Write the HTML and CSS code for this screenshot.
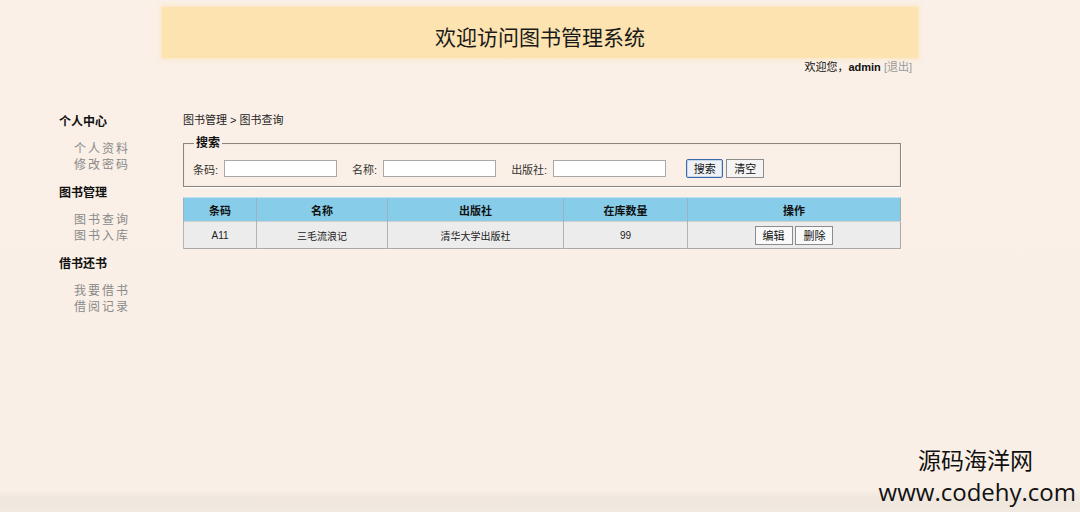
FILE: index.html
```html
<!DOCTYPE html>
<html lang="zh-CN">
<head>
  <meta charset="utf-8">
  <title>图书管理系统</title>
  <link rel="stylesheet" href="styles.css">
</head>
<body>
  <div class="header">欢迎访问图书管理系统</div>
  <div class="userbar">欢迎您，<b>admin</b> <a href="#" class="logout">[退出]</a></div>

  <div class="layout">
    <div class="sidebar">
      <h3>个人中心</h3>
      <ul>
        <li><a href="#">个人资料</a></li>
        <li><a href="#">修改密码</a></li>
      </ul>
      <h3>图书管理</h3>
      <ul>
        <li><a href="#">图书查询</a></li>
        <li><a href="#">图书入库</a></li>
      </ul>
      <h3>借书还书</h3>
      <ul>
        <li><a href="#">我要借书</a></li>
        <li><a href="#">借阅记录</a></li>
      </ul>
    </div>

    <div class="main">
      <div class="crumb">图书管理 &gt; 图书查询</div>
      <fieldset class="search">
        <legend>搜索</legend>
        <div class="search-row">
          <label>条码:</label><input type="text">
          <label>名称:</label><input type="text">
          <label>出版社:</label><input type="text">
          <button class="btn btn-primary">搜索</button>
          <button class="btn">清空</button>
        </div>
      </fieldset>

      <table class="list">
        <tr>
          <th class="c1">条码</th>
          <th class="c2">名称</th>
          <th class="c3">出版社</th>
          <th class="c4">在库数量</th>
          <th class="c5">操作</th>
        </tr>
        <tr>
          <td>A11</td>
          <td>三毛流浪记</td>
          <td>清华大学出版社</td>
          <td>99</td>
          <td><button class="btn">编辑</button> <button class="btn">删除</button></td>
        </tr>
      </table>
    </div>
  </div>

  <div class="watermark">
    <div class="wm-cn">源码海洋网</div>
    <div class="wm-en">www.codehy.com</div>
  </div>
</body>
</html>
```

FILE: styles.css
```css
body {
  margin: 0;
  padding: 0;
  height: 512px;
  overflow: hidden;
  font-family: "Liberation Sans", "Noto Sans CJK SC", sans-serif;
  color: #222;
  background: linear-gradient(to bottom, #faf0e7 0, #f9efe6 490px, #efe6dd 498px, #f2e9e0 512px);
  position: relative;
}

.header {
  width: 756px;
  height: 51px;
  margin: 7px auto 0;
  background: #fde3b0;
  box-shadow: 0 0 4px 2px #fbe8c8;
  font-family: "Noto Sans CJK SC", sans-serif;
  font-size: 21px;
  line-height: 58px;
  text-align: center;
  color: #1a1a1a;
}

.userbar {
  width: 756px;
  margin: 2px auto 0;
  padding-right: 6px;
  box-sizing: border-box;
  text-align: right;
  font-size: 11px;
  line-height: 14px;
  color: #111;
}
.userbar b {
  font-weight: bold;
}
.logout {
  color: #999;
  text-decoration: none;
}

.layout {
  display: flex;
  padding-left: 59px;
  margin-top: 38px;
}

.sidebar {
  width: 124px;
  flex: none;
  padding-top: 2px;
}
.sidebar h3 {
  margin: 0;
  font-size: 12px;
  line-height: 16px;
  font-weight: bold;
  color: #111;
}
.sidebar ul {
  list-style: none;
  margin: 11px 0 12px;
  padding-left: 15px;
}
.sidebar li {
  font-size: 12px;
  line-height: 16px;
  letter-spacing: 2px;
}
.sidebar a {
  color: #8a8a8a;
  text-decoration: none;
}

.main {
  width: 718px;
  flex: none;
}

.crumb {
  font-size: 11px;
  line-height: 16px;
  color: #222;
}

.search {
  margin: 7px 0 0;
  padding: 0 9px 8px;
  border: 1px solid #8c8480;
  box-shadow: inset 0 0 0 1px #f4ebe2, 1px 1px 0 #fff;
}
.search legend {
  padding: 0 2px;
  margin-left: 1px;
  font-size: 12px;
  line-height: 16px;
  font-weight: bold;
  color: #111;
}
.search-row {
  display: flex;
  align-items: center;
  margin-top: 8px;
  font-size: 11px;
  color: #333;
}
.search-row label {
  margin-right: 6px;
}
.search-row input {
  width: 113px;
  height: 17px;
  box-sizing: border-box;
  border: 1px solid #a8a8a8;
  background: #fff;
  margin: 0 15px 0 0;
  padding: 0;
}
.search-row input:nth-of-type(3) {
  margin-right: 20px;
}

.btn {
  height: 19px;
  width: 38px;
  padding: 0;
  margin: 0;
  font-family: "Noto Sans CJK SC", sans-serif;
  font-size: 11px;
  line-height: 17px;
  color: #111;
  background: #f4f4f4;
  border: 1px solid #8c8c8c;
  border-radius: 0;
}
.search-row .btn + .btn {
  margin-left: 3px;
}
.btn-primary {
  width: 37px;
  background: #eef2f7;
  border-color: #3b6aa6;
  border-radius: 2px;
  box-shadow: inset 0 0 0 1px #c9d7ea;
}

.list {
  width: 718px;
  margin-top: 10px;
  border-collapse: collapse;
  border: 1px solid #a9a9a9;
  font-size: 10px;
  text-align: center;
  color: #222;
}
.list th {
  height: 23px;
  padding: 0;
  background: #87cdea;
  border-top: 1px solid #bfe2f1;
  border-left: 1px solid #9bb3c0;
  font-size: 11px;
  font-weight: bold;
  color: #111;
}
.list td {
  height: 26px;
  padding: 0;
  background: #ececec;
  border-left: 1px solid #b4b4b4;
  border-top: 1px solid #d0d0d0;
}
.list td .btn {
  background: #f9f9f9;
}
.c1 { width: 72px; }
.c2 { width: 130px; }
.c3 { width: 175px; }
.c4 { width: 123px; }

.watermark {
  position: absolute;
  right: 4px;
  bottom: 5px;
  text-align: right;
  color: #111;
}
.wm-cn {
  font-family: "Noto Sans CJK SC", sans-serif;
  font-size: 23px;
  line-height: 36px;
  margin-right: 43px;
}
.wm-en {
  font-family: "Open Sans", sans-serif;
  font-size: 24px;
  line-height: 30px;
}
```
